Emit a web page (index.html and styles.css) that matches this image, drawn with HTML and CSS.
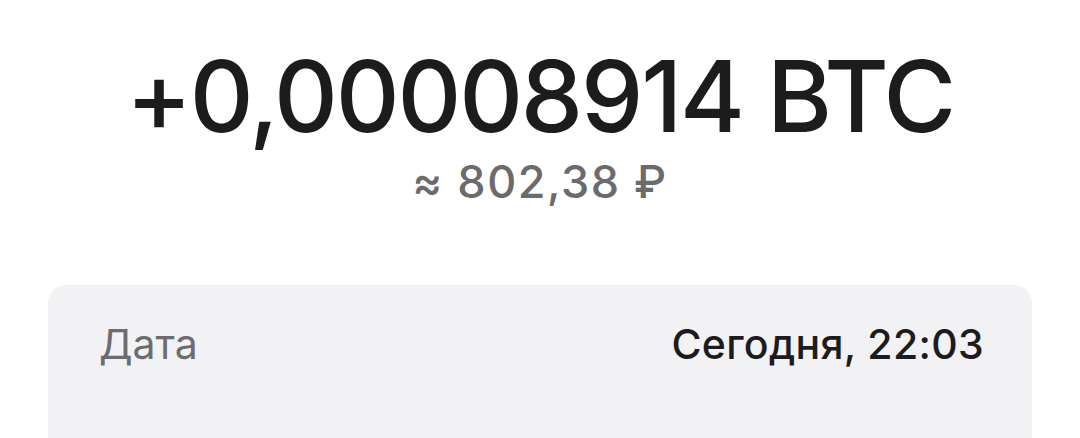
FILE: index.html
```html
<!DOCTYPE html>
<html lang="ru">
<head>
    <meta charset="UTF-8">
    <meta name="viewport" content="width=device-width, initial-scale=1.0">
    <title>Транзакция</title>
    <link rel="stylesheet" href="styles.css">
</head>
<body>

    <div class="amount">
        <div class="amount-main">+0,00008914 BTC</div>
        <div class="amount-fiat">≈ 802,38 ₽</div>
    </div>

    <div class="details">
        <div class="row">
            <span class="label">Дата</span>
            <span class="value">Сегодня, 22:03</span>
        </div>
    </div>

</body>
</html>
```

FILE: styles.css
```css
body { margin: 0; background: #fff; font-family: Inter, "Liberation Sans", Arial, sans-serif; color: #1c1c1e; }
.amount { text-align: center; padding-top: 37px; }
.amount-main { font-size: 99px; line-height: 1.2; font-weight: 500; letter-spacing: -2.2px; }
.amount-fiat { font-size: 45px; line-height: 1.2; font-weight: 500; color: #6b6b6e; letter-spacing: 1.5px; margin-top: -1px; }
.details { margin: 76px 48px 0; background: #f2f2f5; border-radius: 18px; min-height: 220px; padding: 35px 48px 0 51px; }
.row { display: flex; justify-content: space-between; align-items: baseline; font-size: 41px; line-height: 1.2; }
.label { color: #6c6c70; }
.value { font-weight: 500; letter-spacing: 0.3px; }
```
